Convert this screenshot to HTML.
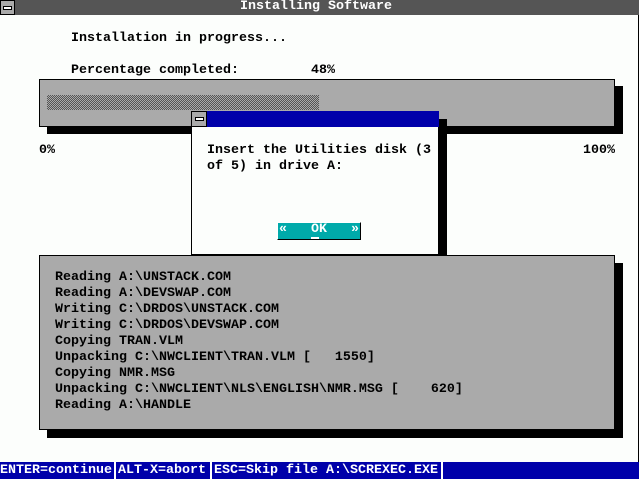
<!DOCTYPE html>
<html><head><style>
*{margin:0;padding:0;box-sizing:border-box}
body{width:639px;height:479px;background:#fcfefc;position:relative;overflow:hidden;font-family:"Liberation Mono",monospace;font-size:13.33px;line-height:16px;color:#000;font-weight:bold}
.a{position:absolute;white-space:pre}
.gray{background:#aaaaaa}
.sh{background:#000}
</style></head><body>
<div class="a" style="left:0;top:0;width:639px;height:15px;background:#555555"></div>
<div class="a gray" style="left:0;top:0;width:15px;height:15px;border:1px solid #000"></div>
<div class="a" style="left:3px;top:6px;width:9px;height:4px;border:1px solid #000;background:#fff"></div>
<div class="a" style="left:240px;top:-1px;color:#fff">Installing Software</div>
<div class="a sh" style="left:638px;top:15px;width:1px;height:447px"></div>

<div class="a" style="left:71px;top:31px">Installation in progress...</div>
<div class="a" style="left:71px;top:63px">Percentage completed:         48%</div>

<div class="a sh" style="left:47px;top:86px;width:576px;height:48px"></div>
<div class="a gray" style="left:39px;top:79px;width:576px;height:48px;border:1px solid #000"></div>
<div class="a" style="left:47px;top:95px;width:272px;height:15px;background:repeating-conic-gradient(#555 0 25%,#aaa 0 50%) 0 0/2px 2px"></div>

<div class="a" style="left:39px;top:143px">0%</div>
<div class="a" style="left:583px;top:143px">100%</div>

<div class="a sh" style="left:199px;top:119px;width:248px;height:144px"></div>
<div class="a" style="left:191px;top:111px;width:248px;height:144px;background:#fcfefc;border:1px solid #000"></div>
<div class="a" style="left:207px;top:111px;width:232px;height:16px;background:#0000aa"></div>
<div class="a gray" style="left:191px;top:111px;width:16px;height:16px;border:1px solid #000"></div>
<div class="a" style="left:195px;top:117px;width:9px;height:4px;border:1px solid #000;background:#fff"></div>
<div class="a" style="left:207px;top:143px">Insert the Utilities disk (3
of 5) in drive A:</div>
<div class="a" style="left:277px;top:222px;width:84px;height:18px;background:#00aaaa;border:1px solid #000;border-top-color:#fff;border-left-color:#fff"></div>
<div class="a" style="left:279px;top:222px;color:#fff">«   OK   »</div>
<div class="a" style="left:311px;top:237px;width:8px;height:2px;background:#fff"></div>

<div class="a sh" style="left:47px;top:263px;width:576px;height:175px"></div>
<div class="a gray" style="left:39px;top:255px;width:576px;height:175px;border:1px solid #000"></div>
<div class="a" style="left:55px;top:270px">Reading A:\UNSTACK.COM
Reading A:\DEVSWAP.COM
Writing C:\DRDOS\UNSTACK.COM
Writing C:\DRDOS\DEVSWAP.COM
Copying TRAN.VLM
Unpacking C:\NWCLIENT\TRAN.VLM [   1550]
Copying NMR.MSG
Unpacking C:\NWCLIENT\NLS\ENGLISH\NMR.MSG [    620]
Reading A:\HANDLE</div>

<div class="a" style="left:0;top:462px;width:639px;height:17px;background:#0000aa"></div>
<div class="a" style="left:0;top:463px;color:#fff">ENTER=continue</div>
<div class="a" style="left:118px;top:463px;color:#fff">ALT-X=abort</div>
<div class="a" style="left:214px;top:463px;color:#fff">ESC=Skip file A:\SCREXEC.EXE</div>
<div class="a" style="left:114px;top:462px;width:2px;height:17px;background:#fff"></div>
<div class="a" style="left:210px;top:462px;width:2px;height:17px;background:#fff"></div>
<div class="a" style="left:441px;top:462px;width:2px;height:17px;background:#fff"></div>
</body></html>
